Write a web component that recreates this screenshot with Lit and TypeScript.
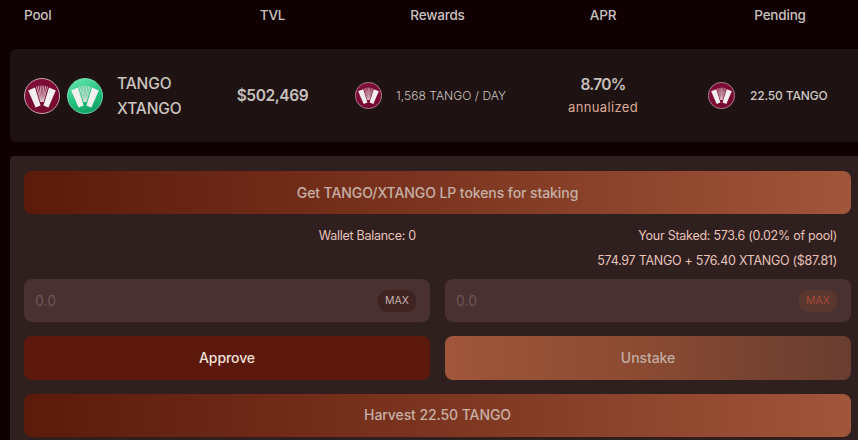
import { LitElement, html, css, svg } from "lit";
import { customElement } from "lit/decorators.js";

const icon = (kind: "red" | "green", size: number) => {
  const id = `g${kind}`;
  return html`<svg class="icon" width=${size} height=${size} viewBox="0 0 36 36">
    <defs>
      <linearGradient id=${id} x1="0.3" y1="0" x2="0.7" y2="1">
        <stop offset="0" stop-color=${kind === "red" ? "#7d0b36" : "#62e3a8"}></stop>
        <stop offset="0.55" stop-color=${kind === "red" ? "#7a0a33" : "#1fc07c"}></stop>
        <stop offset="1" stop-color=${kind === "red" ? "#760a30" : "#0f9e62"}></stop>
      </linearGradient>
    </defs>
    <circle cx="18" cy="18" r="17.5" fill=${`url(#${id})`} stroke=${kind === "red" ? "#e6c9cf" : "#7fe8bd"} stroke-width="0.8"></circle>
    ${svg`
      <path d="M4.2 12.4 L11 9.6 L16.6 27.4 L11.6 29.4 Z" fill="#f4efef"></path>
      <path d="M31.8 12.4 L25 9.6 L19.4 27.4 L24.4 29.4 Z" fill="#f4efef"></path>
      <g stroke="#f4e6ea" stroke-width="0.8" fill="none" opacity="0.9">
        <path d="M12.4 8.6 L16.8 24"></path>
        <path d="M14.2 8 L17.2 24"></path>
        <path d="M16.1 7.6 L17.6 24"></path>
        <path d="M18 7.4 L18 24"></path>
        <path d="M19.9 7.6 L18.4 24"></path>
        <path d="M21.8 8 L18.8 24"></path>
        <path d="M23.6 8.6 L19.2 24"></path>
      </g>`}
  </svg>`;
};

@customElement("app-root")
export class AppRoot extends LitElement {
  static styles = css`
    :host {
      display: block;
      width: 858px;
      height: 440px;
      overflow: hidden;
      background: #100002;
      font-family: "Inter", "Liberation Sans", sans-serif;
      color: #cfc6c2;
      box-sizing: border-box;
      padding-left: 10px;
    }
    .cols {
      display: grid;
      grid-template-columns: 166px 165px 165px 166px 166px;
      padding-left: 14px;
      box-sizing: border-box;
    }
    .head {
      height: 49px;
      padding-bottom: 19px;
      align-items: center;
      box-sizing: border-box;
      font-size: 13.5px;
      font-weight: 500;
      letter-spacing: -0.2px;
      color: #c9c2bf;
      text-align: center;
    }
    .head .first { text-align: left; }
    .head .last { padding-left: 22px; }
    .row {
      height: 93px;
      background: #1e1312;
      border-radius: 6px 0 0 6px;
      align-items: center;
    }
    .pool { display: flex; align-items: center; }
    .pool .icon + .icon { margin-left: 7px; }
    .names {
      margin-left: 14px;
      font-size: 15.5px;
      line-height: 25px;
      font-weight: 500;
      letter-spacing: -0.1px;
      color: #cdc4bf;
    }
    .tvl {
      text-align: center;
      font-size: 15.5px;
      font-weight: 600;
      letter-spacing: -0.4px;
      color: #c8c0bc;
    }
    .reward { display: flex; align-items: center; font-size: 12px; font-weight: 300; letter-spacing: 0.05px; color: #cfc6c2; }
    .reward span { margin-left: 14px; }
    .apr { text-align: center; }
    .apr b { display: block; font-size: 15.5px; line-height: 23px; font-weight: 600; letter-spacing: -0.7px; color: #c8c0bc; }
    .apr i { display: block; font-style: normal; font-size: 13px; line-height: 22px; color: #dca995; letter-spacing: 0.35px; }
    .pending { display: flex; align-items: center; padding-left: 22px; font-size: 12px; font-weight: 500; letter-spacing: -0.15px; color: #cfc6c2; }
    .pending span { margin-left: 15px; }
    .panel {
      margin-top: 14px;
      height: 300px;
      background: #2f1f1e;
      border-radius: 4px 0 0 0;
      padding: 15px 7px 0 14px;
      box-sizing: border-box;
      display: flex;
      flex-direction: column;
    }
    .btn {
      display: flex;
      align-items: center;
      justify-content: center;
      border-radius: 8px;
      font-size: 14px;
      font-weight: 500;
      letter-spacing: -0.08px;
      height: 43px;
      flex: none;
    }
    .grad {
      background: linear-gradient(90deg, #5b1a0a 0%, #7c3520 50%, #a0563a 100%);
      color: #c7b0a6;
    }
    .info {
      display: grid;
      grid-template-columns: 406px 406px;
      column-gap: 15px;
      font-size: 12.5px;
      letter-spacing: -0.26px;
      line-height: 25px;
      color: #e8c3b9;
      text-align: right;
      padding-top: 9px;
      height: 65px;
      box-sizing: border-box;
      flex: none;
    }
    .info > div { padding-right: 14px; }
    .split {
      display: grid;
      grid-template-columns: 406px 406px;
      column-gap: 15px;
      flex: none;
    }
    .field {
      height: 43px;
      background: #483130;
      border-radius: 8px;
      display: flex;
      align-items: center;
      justify-content: space-between;
      padding: 0 14px 0 11px;
      font-size: 14px;
      color: #6b5654;
    }
    .max {
      width: 38px;
      height: 22px;
      border-radius: 9px;
      display: flex;
      align-items: center;
      justify-content: center;
      font-size: 10.5px;
      font-weight: 400;
      letter-spacing: 0;
    }
    .max.a { background: #3f2321; color: #c4b0ab; }
    .max.b { background: #5a372e; color: #a64a38; }
    .actions { margin-top: 14px; }
    .actions .btn { height: 44px; padding-bottom: 2px; box-sizing: border-box; }
    .approve { background: #5c190b; color: #efe0d8; }
    .unstake { background: linear-gradient(90deg, #a0563a 0%, #8a4a32 50%, #683d30 100%); color: #c2aca3; }
    .harvest { margin-top: 14px; padding-bottom: 2px; box-sizing: border-box; }
  `;

  render() {
    return html`
      <div class="cols head">
        <div class="first">Pool</div>
        <div>TVL</div>
        <div>Rewards</div>
        <div>APR</div>
        <div class="last">Pending</div>
      </div>
      <div class="cols row">
        <div class="pool">
          ${icon("red", 36)}${icon("green", 36)}
          <div class="names">TANGO<br />XTANGO</div>
        </div>
        <div class="tvl">$502,469</div>
        <div class="reward">${icon("red", 27)}<span>1,568 TANGO / DAY</span></div>
        <div class="apr"><b>8.70%</b><i>annualized</i></div>
        <div class="pending">${icon("red", 27)}<span>22.50 TANGO</span></div>
      </div>
      <div class="panel">
        <div class="btn grad">Get TANGO/XTANGO LP tokens for staking</div>
        <div class="info">
          <div>Wallet Balance: 0</div>
          <div>Your Staked: 573.6 (0.02% of pool)<br />574.97 TANGO + 576.40 XTANGO ($87.81)</div>
        </div>
        <div class="split">
          <div class="field"><span>0.0</span><span class="max a">MAX</span></div>
          <div class="field"><span>0.0</span><span class="max b">MAX</span></div>
        </div>
        <div class="split actions">
          <div class="btn approve">Approve</div>
          <div class="btn unstake">Unstake</div>
        </div>
        <div class="btn grad harvest">Harvest 22.50 TANGO</div>
      </div>
    `;
  }
}
